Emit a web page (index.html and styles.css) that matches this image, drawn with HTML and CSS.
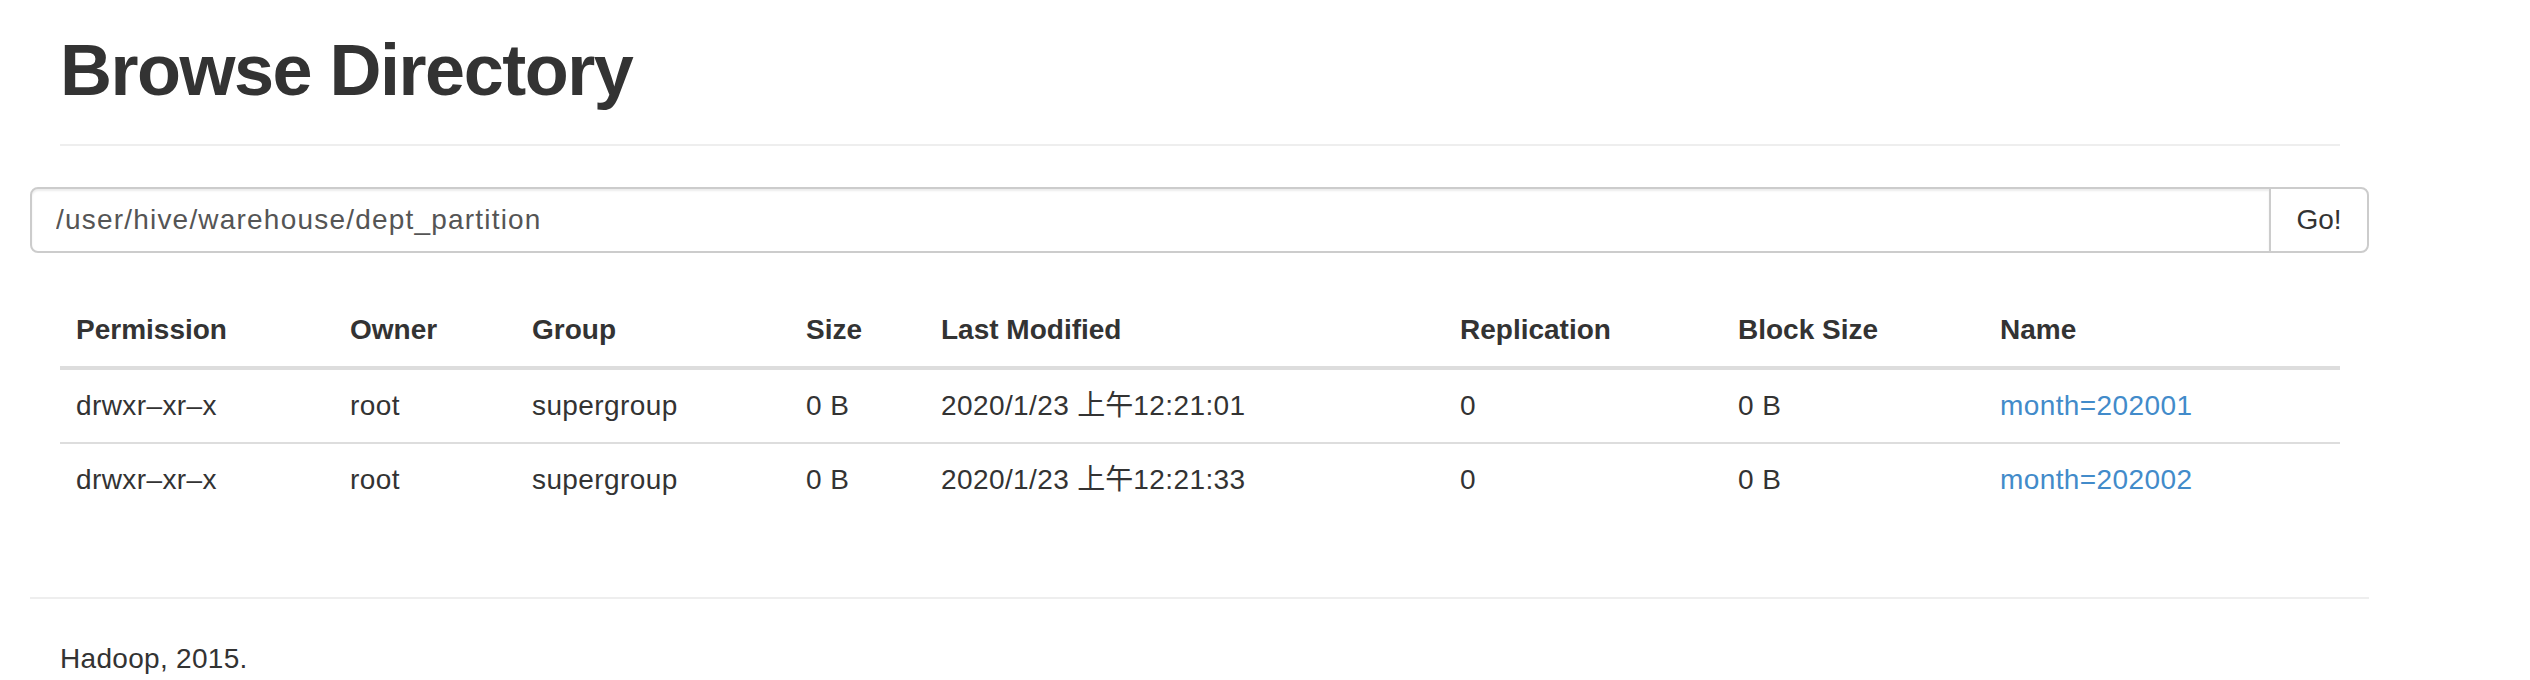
FILE: index.html
```html
<!DOCTYPE html>
<html lang="en">
<head>
<meta charset="utf-8">
<title>Browsing HDFS</title>
<link rel="stylesheet" href="styles.css">
</head>
<body>
<div class="page">
  <header class="page-header">
    <h1>Browse Directory</h1>
  </header>

  <form class="path-form">
    <input class="path-input" type="text" value="/user/hive/warehouse/dept_partition">
    <button class="go-btn" type="button">Go!</button>
  </form>

  <table class="listing">
    <colgroup>
      <col class="c-perm"><col class="c-owner"><col class="c-group"><col class="c-size">
      <col class="c-mod"><col class="c-repl"><col class="c-block"><col class="c-name">
    </colgroup>
    <thead>
      <tr>
        <th>Permission</th>
        <th>Owner</th>
        <th>Group</th>
        <th>Size</th>
        <th>Last Modified</th>
        <th>Replication</th>
        <th>Block Size</th>
        <th>Name</th>
      </tr>
    </thead>
    <tbody>
      <tr>
        <td>drwxr&#8211;xr&#8211;x</td>
        <td>root</td>
        <td>supergroup</td>
        <td>0 B</td>
        <td>2020/1/23 <span class="cjk">上午</span>12:21:01</td>
        <td>0</td>
        <td>0 B</td>
        <td><a href="#">month=202001</a></td>
      </tr>
      <tr>
        <td>drwxr&#8211;xr&#8211;x</td>
        <td>root</td>
        <td>supergroup</td>
        <td>0 B</td>
        <td>2020/1/23 <span class="cjk">上午</span>12:21:33</td>
        <td>0</td>
        <td>0 B</td>
        <td><a href="#">month=202002</a></td>
      </tr>
    </tbody>
  </table>

  <hr class="footer-rule">
  <footer class="footer">
    <p>Hadoop, 2015.</p>
  </footer>
</div>
</body>
</html>
```

FILE: styles.css
```css
html, body {
  margin: 0;
  padding: 0;
  background: #fff;
}

body {
  font-family: "Liberation Sans", Arial, "Noto Sans CJK SC", sans-serif;
  font-size: 28px;
  line-height: 40px;
  color: #333;
}

.page {
  width: 2339px;
  margin-left: 30px;
}

.page-header {
  margin: 0 29px 0 30px;
  padding-top: 30px;
  padding-bottom: 34px;
  border-bottom: 2px solid #eee;
}

.page-header h1 {
  margin: 0;
  font-size: 72px;
  line-height: 80px;
  font-weight: bold;
  letter-spacing: -1.5px;
  color: #333;
}

.path-form {
  display: flex;
  height: 66px;
  margin: 41px 0 0 0;
}

.path-input {
  flex: 1;
  min-width: 0;
  height: 66px;
  box-sizing: border-box;
  margin: 0;
  padding: 0 24px;
  border: 2px solid #ccc;
  border-radius: 8px 0 0 8px;
  box-shadow: inset 0 2px 2px rgba(0, 0, 0, 0.075);
  font-family: inherit;
  font-size: 28px;
  letter-spacing: 1.2px;
  color: #555;
  background: #fff;
  outline: none;
}

.go-btn {
  width: 100px;
  height: 66px;
  box-sizing: border-box;
  margin: 0 0 0 -2px;
  padding: 0;
  border: 2px solid #ccc;
  border-radius: 0 8px 8px 0;
  background: #fff;
  font-family: inherit;
  font-size: 28px;
  color: #333;
}

.listing {
  width: 2280px;
  margin: 41px 0 0 30px;
  border-collapse: separate;
  border-spacing: 0;
  table-layout: fixed;
}

.c-perm { width: 274px; }
.c-owner { width: 182px; }
.c-group { width: 274px; }
.c-size { width: 135px; }
.c-mod { width: 519px; }
.c-repl { width: 278px; }
.c-block { width: 262px; }
.c-name { width: 356px; }

.listing th,
.listing td {
  padding: 16px;
  line-height: 40px;
  text-align: left;
  white-space: nowrap;
}

.listing th {
  font-weight: bold;
  vertical-align: bottom;
  border-bottom: 4px solid #ddd;
}

.listing td {
  vertical-align: top;
  letter-spacing: 0.4px;
  border-top: 2px solid #ddd;
}

.listing tbody tr:first-child td {
  border-top: 0;
}

.cjk {
  font-family: "Noto Sans CJK SC", sans-serif;
  line-height: 20px;
  letter-spacing: 0;
}

.listing a {
  color: #428bca;
  text-decoration: none;
}

.footer-rule {
  margin: 81px 0 0 0;
  border: 0;
  border-top: 2px solid #eee;
  height: 0;
}

.footer p {
  margin: 40px 0 0 30px;
  letter-spacing: 0.3px;
}
```
